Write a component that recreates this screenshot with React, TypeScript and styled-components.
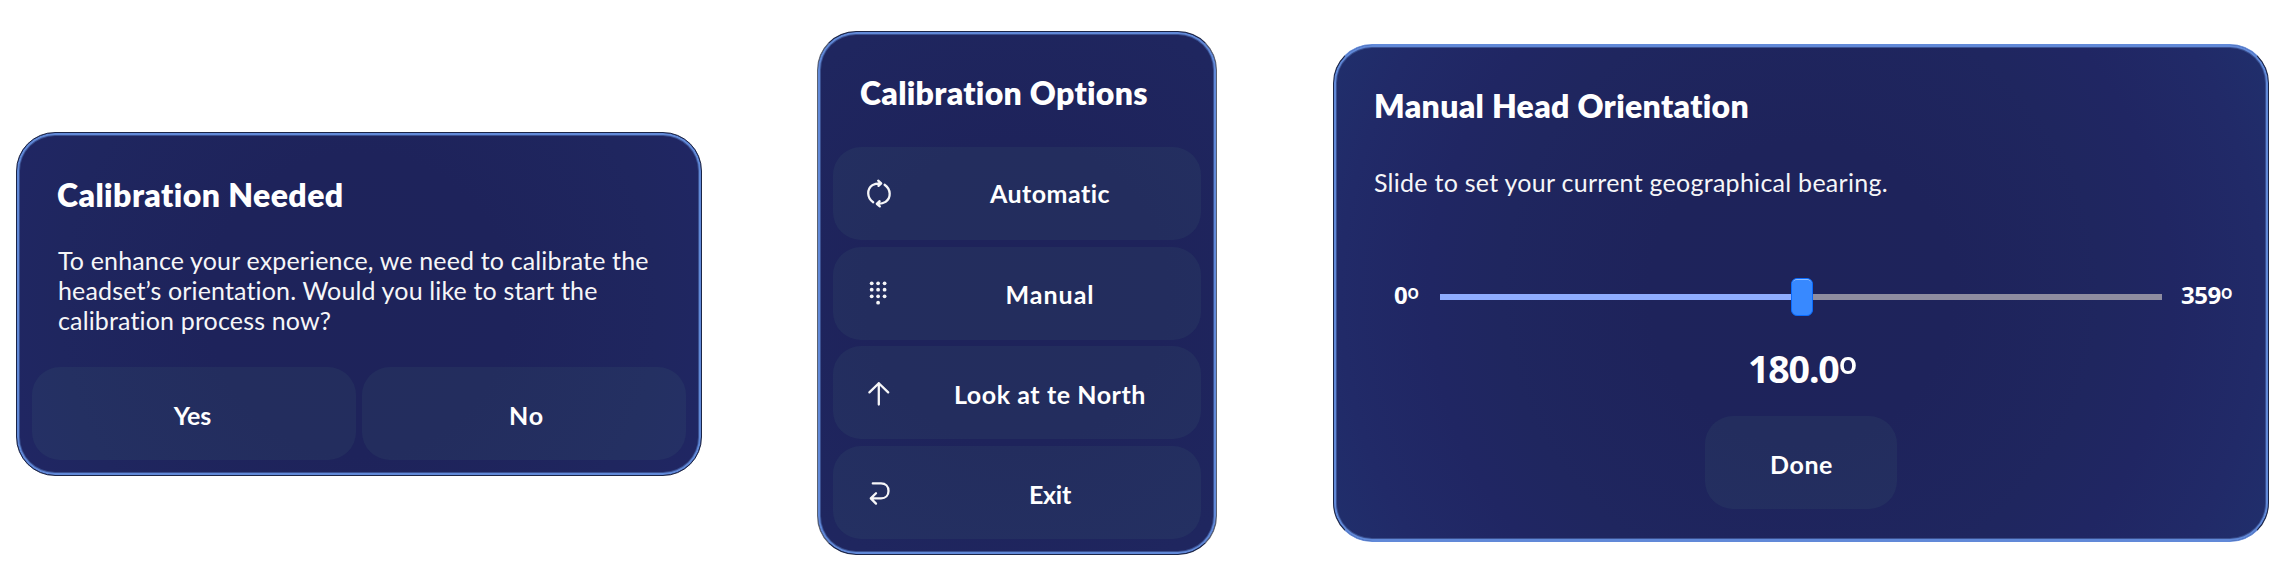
import React from "react";
import styled, { createGlobalStyle, css } from "styled-components";

const GlobalStyle = createGlobalStyle`
  *, *::before, *::after { box-sizing: border-box; }
  body {
    margin: 0;
    background: #ffffff;
    color: #ffffff;
    font-family: Lato, "Liberation Sans", sans-serif;
    overflow: hidden;
  }
`;

const Stage = styled.main`
  display: flex;
  align-items: flex-start;
  width: 2292px;
  height: 575px;
  padding-left: 16px;
`;

const Panel = styled.section<{ $width: number; $height: number; $top: number; $left?: number; $edge?: string; $cap?: string }>`
  display: flex;
  flex-direction: column;
  flex: none;
  width: ${(p) => p.$width}px;
  height: ${(p) => p.$height}px;
  margin: ${(p) => p.$top}px 0 0 ${(p) => p.$left ?? 0}px;
  padding: 0 15px;
  border: 1px solid;
  border-color: ${(p) => p.$cap ?? "#1b2547"} ${(p) => p.$edge ?? "#1b2547"};
  border-radius: 39px;
  background: radial-gradient(circle at center, #1e235a 0, #1e235b 150px, #1f265f 300px, #202663 370px, #212a68 460px, #20306d 540px);
  background-origin: border-box;
  box-shadow: inset 0 0 0 2px #6189d8, inset 0 0 0 3px #3a5090;
`;

const Title = styled.h1<{ $top: number; $left: number; $spacing: number }>`
  margin: ${(p) => p.$top}px 0 0 ${(p) => p.$left}px;
  font-size: 32px;
  font-weight: 800;
  line-height: 40px;
  letter-spacing: ${(p) => p.$spacing}px;
  font-variant-ligatures: none;
  white-space: nowrap;
`;

const Message = styled.p<{ $top: number; $left: number; $spacing: number }>`
  margin: ${(p) => p.$top}px 0 0 ${(p) => p.$left}px;
  font-size: 25px;
  line-height: 30px;
  letter-spacing: ${(p) => p.$spacing}px;
  font-variant-ligatures: none;
  white-space: nowrap;
  color: #f6f6f8;
`;

const buttonBase = css`
  height: 93px;
  border: 0;
  border-radius: 28px;
  background: rgba(90, 150, 130, 0.09);
  color: #ffffff;
  font: 700 25px Lato, "Liberation Sans", sans-serif;
  font-variant-ligatures: none;
  white-space: nowrap;
`;

const Button = styled.button<{ $width: number; $indent?: number; $spacing?: number }>`
  ${buttonBase}
  width: ${(p) => p.$width}px;
  padding: 2px 0 0;
  text-indent: ${(p) => p.$indent ?? 0}px;
  letter-spacing: ${(p) => p.$spacing ?? 0}px;
`;

const ButtonRow = styled.div`
  display: flex;
  gap: 6px;
  margin-top: 32px;
`;

const OptionList = styled.div`
  display: flex;
  flex-direction: column;
  gap: 6.67px;
  margin-top: 34px;
`;

const Option = styled.button<{ $spacing: number }>`
  ${buttonBase}
  display: grid;
  grid-template-columns: 92px 1fr;
  align-items: center;
  width: 368px;
  padding: 0 26px 0 0;
  letter-spacing: ${(p) => p.$spacing}px;
`;

const Label = styled.span<{ $lift?: number; $drop?: number }>`
  padding-top: ${(p) => p.$drop ?? 0}px;
  padding-bottom: ${(p) => p.$lift ?? 0}px;
`;

const Icon = styled.svg`
  justify-self: center;
  width: 30px;
  height: 30px;
  fill: none;
  stroke: #f6f6f8;
  stroke-width: 2.3;
  stroke-linecap: round;
  stroke-linejoin: round;
`;

const SliderRow = styled.div`
  display: flex;
  align-items: center;
  height: 38px;
  margin: 81px 0 0 45px;
`;

const Bound = styled.span<{ $width: number; $inset?: number }>`
  width: ${(p) => p.$width}px;
  padding: 0 0 5px ${(p) => p.$inset ?? 0}px;
  font: 700 24px "Noto Sans", sans-serif;
  line-height: 32px;
  letter-spacing: -0.5px;
  white-space: nowrap;
`;

const Degree = styled.span`
  font-size: 1.3em;
  font-weight: 500;
  line-height: 0;
  vertical-align: -0.18em;
`;

const Track = styled.div`
  display: grid;
  align-items: center;
  justify-items: center;
  width: 722px;
  height: 38px;
  padding-left: 2px;
  background: linear-gradient(90deg, #8fadff 50%, #8f8da0 50%) center / 100% 6px no-repeat;
`;

const Thumb = styled.div`
  width: 22px;
  height: 38px;
  border: 1px solid #0a6cff;
  border-radius: 6px;
  background: #3889ff;
  box-shadow: inset 0 1px 0 -0.3px #a9cdff;
`;

const Reading = styled.div`
  align-self: center;
  margin-top: 31px;
  padding-left: 2px;
  font: 700 37.5px "Noto Sans", sans-serif;
  line-height: 44px;
  letter-spacing: -1.1px;
`;

const Footer = styled.div`
  display: flex;
  justify-content: center;
  margin-top: 25px;
`;

const SyncIcon = () => (
  <Icon viewBox="0 0 30 30">
    <path d="M9.2 23.2C2.8 18.9 2.6 10 8.4 6.1C10.6 4.6 13 4.2 16.8 4.3M14.2 1.7L17.2 4.3L14.5 6.9" />
    <path d="M20.6 5.8C27.2 10.4 27.2 18.9 21.6 22.9C19.4 24.4 17 24.9 13.2 24.8M15.6 22.2L12.8 24.8L15.8 27.4" />
  </Icon>
);

const KeypadIcon = () => (
  <Icon viewBox="0 0 30 30">
    <g fill="#f6f6f8" stroke="none">
      {[5.3, 11.7, 18.3].map((y) => [7.7, 14.1, 20.6].map((x) => <circle key={`${x}-${y}`} cx={x} cy={y} r="1.9" />))}
      <circle cx="14.1" cy="24.7" r="1.9" />
    </g>
  </Icon>
);

const UpIcon = () => (
  <Icon viewBox="0 0 30 30">
    <path d="M14.8 5.2V26.6M5.4 14.4L14.8 5.2L24.2 14.4" />
  </Icon>
);

const ReturnIcon = () => (
  <Icon viewBox="0 0 30 30">
    <path d="M8.8 6.4H17C21.6 6.4 24.5 9.6 24.5 13.9S21.6 21.4 17 21.4H7M12 16.2L6.8 21.4L12 26.6" />
  </Icon>
);

const options = [
  { label: "Automatic", spacing: 0.45, lift: 2, drop: 0, icon: <SyncIcon /> },
  { label: "Manual", spacing: 1, lift: 0, drop: 1, icon: <KeypadIcon /> },
  { label: "Look at te North", spacing: 0.57, lift: 0, drop: 2, icon: <UpIcon /> },
  { label: "Exit", spacing: -0.3, lift: 0, drop: 3, icon: <ReturnIcon /> },
];

export default function App() {
  return (
    <>
      <GlobalStyle />
      <Stage>
        <Panel $width={686} $height={344} $top={132}>
          <Title $top={42} $left={25} $spacing={0.42}>Calibration Needed</Title>
          <Message $top={30} $left={26} $spacing={0.15}>
            To enhance your experience, we need to calibrate the
            <br />
            headset’s orientation. Would you like to start the
            <br />
            calibration process now?
          </Message>
          <ButtonRow>
            <Button $width={324} $indent={-3}>Yes</Button>
            <Button $width={324} $indent={5} $spacing={1}>No</Button>
          </ButtonRow>
        </Panel>

        <Panel $width={400} $height={524} $top={31} $left={115} $edge="#5a6172">
          <Title $top={41} $left={27} $spacing={0.3}>Calibration Options</Title>
          <OptionList>
            {options.map((o) => (
              <Option key={o.label} $spacing={o.spacing}>
                {o.icon}
                <Label $lift={o.lift} $drop={o.drop}>{o.label}</Label>
              </Option>
            ))}
          </OptionList>
        </Panel>

        <Panel $width={936} $height={498} $top={44} $left={116} $cap="#6189d8">
          <Title $top={41} $left={25} $spacing={0.32}>Manual Head Orientation</Title>
          <Message $top={41} $left={25} $spacing={0.27}>Slide to set your current geographical bearing.</Message>
          <SliderRow>
            <Bound $width={46}>0<Degree>º</Degree></Bound>
            <Track>
              <Thumb />
            </Track>
            <Bound $width={76} $inset={19}>
              359<Degree>º</Degree>
            </Bound>
          </SliderRow>
          <Reading>180.0<Degree>º</Degree></Reading>
          <Footer>
            <Button $width={192} $spacing={0.55} $indent={1}>Done</Button>
          </Footer>
        </Panel>
      </Stage>
    </>
  );
}
